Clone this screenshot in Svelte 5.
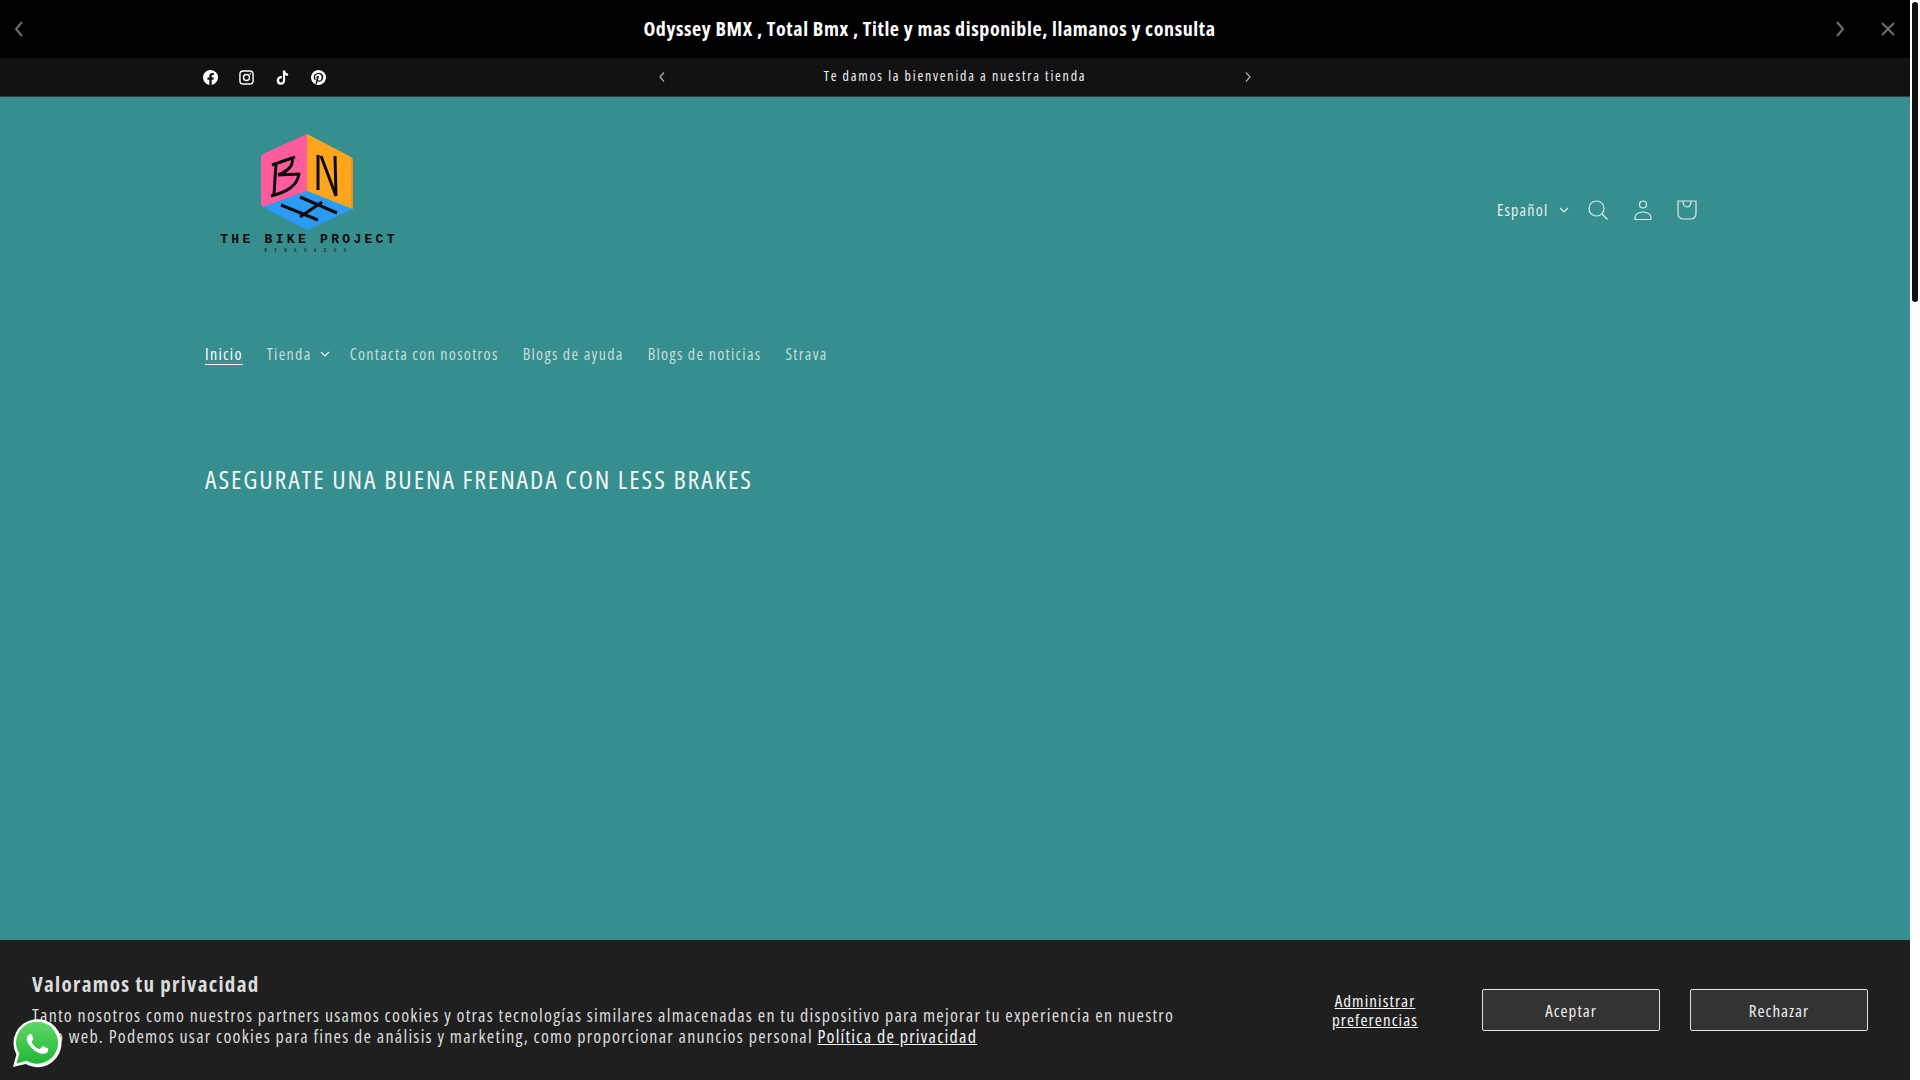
<script>
  const socials = ['facebook', 'instagram', 'tiktok', 'pinterest'];
  const navLinks = ['Contacta con nosotros', 'Blogs de ayuda', 'Blogs de noticias', 'Strava'];
</script>

<div class="page">
  <div class="site">
    <div class="promo">
      <button class="promo-btn" aria-label="Anterior">
        <svg width="14" height="18" viewBox="0 0 14 18"><path d="M10 2 4 9l6 7" /></svg>
      </button>
      <p class="promo-text">Odyssey BMX , Total Bmx , Title y mas disponible, llamanos y consulta</p>
      <button class="promo-btn" aria-label="Siguiente">
        <svg width="14" height="18" viewBox="0 0 14 18"><path d="m4 2 6 7-6 7" /></svg>
      </button>
      <button class="promo-close" aria-label="Cerrar">
        <svg width="14" height="14" viewBox="0 0 14 14"><path d="m1 1 12 12M13 1 1 13" /></svg>
      </button>
    </div>

    <div class="utility">
      <div class="utility-inner">
        <div class="socials">
          {#each socials as name}
            <a href="#top" class="social" aria-label={name}>
              {#if name === 'facebook'}
                <svg viewBox="0 0 16 16" width="15" height="15"><path fill="#fff" d="M16 8a8 8 0 1 0-9.250 7.900v-5.600H4.700V8h2.050V6.240c0-2 1.200-3.120 3.030-3.120.88 0 1.800.16 1.800.16v1.970h-1c-1 0-1.300.62-1.300 1.250V8h2.220l-.35 2.300H9.280v5.600A8 8 0 0 0 16 8z" /></svg>
              {:else if name === 'instagram'}
                <svg viewBox="0 0 16 16" width="15" height="15"><rect x="1" y="1" width="14" height="14" rx="3.600" fill="none" stroke="#fff" stroke-width="1.500" /><circle cx="8" cy="8" r="3.200" fill="none" stroke="#fff" stroke-width="1.500" /><circle cx="12" cy="4" r=".9" fill="#fff" /></svg>
              {:else if name === 'tiktok'}
                <svg viewBox="0 0 16 16" width="15" height="15"><path fill="#fff" d="M8.400.5h2.400c.2 1.900 1.300 3.100 3.200 3.300v2.400c-1.200 0-2.200-.3-3.200-1v5.600c0 3-2.300 5-5 5S1.800 13.600 1.800 11c0-2.900 2.500-5 5.500-4.700v2.500c-1.600-.3-3 .7-3 2.200 0 1.300 1 2.200 2.200 2.200 1.300 0 2-.9 2-2.300z" /></svg>
              {:else}
                <svg viewBox="0 0 16 16" width="15" height="15"><path fill="#fff" d="M8 0a8 8 0 0 0-2.900 15.450c-.07-.63-.13-1.600.03-2.300l.94-3.970s-.24-.48-.24-1.180c0-1.100.64-1.930 1.440-1.930.68 0 1 .51 1 1.120 0 .68-.43 1.700-.66 2.640-.19.790.4 1.440 1.180 1.440 1.420 0 2.500-1.500 2.500-3.650 0-1.900-1.370-3.240-3.330-3.240-2.270 0-3.600 1.700-3.600 3.460 0 .69.260 1.420.6 1.830.06.080.07.150.05.230l-.22.900c-.04.150-.12.180-.27.110-1-.46-1.620-1.920-1.620-3.100 0-2.520 1.830-4.840 5.290-4.840 2.770 0 4.930 1.980 4.930 4.620 0 2.760-1.740 4.980-4.150 4.980-.81 0-1.570-.42-1.830-.92l-.5 1.900c-.18.700-.67 1.570-1 2.100A8 8 0 1 0 8 0z" /></svg>
              {/if}
            </a>
          {/each}
        </div>
        <div class="announce">
          <svg class="chev" width="10" height="12" viewBox="0 0 10 12"><path d="M7 1.500 3 6l4 4.500" /></svg>
          <span class="announce-text">Te damos la bienvenida a nuestra tienda</span>
          <svg class="chev" width="10" height="12" viewBox="0 0 10 12"><path d="m3 1.500 4 4.500-4 4.500" /></svg>
        </div>
        <div class="utility-spacer"></div>
      </div>
    </div>

    <header class="header">
      <div class="header-top">
        <a href="#top" class="logo" aria-label="The Bike Project">
          <svg width="92" height="96" viewBox="0 0 92 96">
            <path fill="#ff5c9d" d="M46 0v57L2 73c-1-1-2-2-2-4V24c0-2 1-3 2-4z" />
            <path fill="#ffa51d" d="M46 0l44 23v53L46 57z" />
            <path fill="#e8921a" d="M90 23l2 2v50l-2 1z" />
            <path fill="#2a9cf5" d="M46 57l46 18-46 21L2 73z" />
            <g fill="none" stroke="#0b0b0b" stroke-width="3" stroke-linejoin="round">
              <path d="M11 31 34 23M15 30l-2 30M31 24c2 6-3 13-14 17M17 41l21-1c-2 12-12 18-28 22" />
              <path d="M57 21v35M60 22l15 40M74 22l1 40" />
              <path d="M39 63l37 16M20 71l37 15M61 68 39 83" />
            </g>
          </svg>
          <span class="logo-name">THE BIKE PROJECT</span>
          <span class="logo-sub">BENAHADUX</span>
        </a>
        <div class="header-tools">
          <span class="locale">Español
            <svg class="caret" width="10" height="6" viewBox="0 0 10 6"><path d="m1 1 4 4 4-4" /></svg>
          </span>
          <svg class="tool" width="20" height="20" viewBox="0 0 20 20"><circle cx="8.500" cy="8.500" r="7.500" /><path d="m14 14 5.500 5.500" /></svg>
          <svg class="tool" width="20" height="20" viewBox="0 0 20 20"><circle cx="10" cy="4.500" r="3.500" /><path d="M2 19.500v-2c0-3 3.500-5.500 8-5.500s8 2.500 8 5.500v2z" /></svg>
          <svg class="tool" width="20" height="20" viewBox="0 0 20 20"><path d="M1 1h18v13a5 5 0 0 1-5 5H6a5 5 0 0 1-5-5zM6 1c0 8 8 8 8 0" /></svg>
        </div>
      </div>
      <nav class="nav">
        <a href="#top" class="nav-link active">Inicio</a>
        <span class="nav-link dropdown">Tienda
          <svg class="caret" width="10" height="6" viewBox="0 0 10 6"><path d="m1 1 4 4 4-4" /></svg>
        </span>
        {#each navLinks as link}
          <a href="#top" class="nav-link">{link}</a>
        {/each}
      </nav>
    </header>

    <main class="content">
      <h2>ASEGURATE UNA BUENA FRENADA CON LESS BRAKES</h2>
    </main>
  </div>

  <div class="scrollbar"><div class="thumb"></div></div>

  <section class="cookies">
    <div class="cookies-copy">
      <h3>Valoramos tu privacidad</h3>
      <p>Tanto nosotros como nuestros partners usamos cookies y otras tecnologías similares almacenadas en tu dispositivo para mejorar tu experiencia en nuestro<br />sitio web. Podemos usar cookies para fines de análisis y marketing, como proporcionar anuncios personal <a href="#top">Política de privacidad</a></p>
    </div>
    <div class="cookies-actions">
      <a href="#top" class="prefs">Administrar preferencias</a>
      <button class="cookie-btn">Aceptar</button>
      <button class="cookie-btn">Rechazar</button>
    </div>
  </section>

  <a href="#top" class="whatsapp" aria-label="WhatsApp">
    <svg width="50" height="50" viewBox="0 0 50 50">
      <defs>
        <linearGradient id="wa" x1="0" y1="0" x2="0" y2="1"><stop offset="0" stop-color="#5fd868" /><stop offset="1" stop-color="#22b735" /></linearGradient>
      </defs>
      <path fill="#fff" d="M1 49l3.400-12.400A24 24 0 1 1 13.600 46z" />
      <path fill="url(#wa)" d="M4.500 45.500l2.700-9.700a21 21 0 1 1 7.200 7z" />
      <path fill="#fff" d="M18 13c-.6-1.300-1.200-1.300-1.800-1.300h-1.500c-.5 0-1.400.2-2.100 1-.7.800-2.700 2.700-2.700 6.500s2.800 7.500 3.200 8c.4.500 5.400 8.600 13.300 11.700 6.600 2.600 7.900 2.100 9.400 1.900 1.400-.1 4.600-1.900 5.200-3.700.7-1.800.7-3.400.5-3.700-.2-.3-.7-.5-1.600-.9-.8-.4-4.800-2.400-5.600-2.700-.8-.3-1.300-.4-1.800.4-.6.800-2.100 2.700-2.600 3.200-.5.600-.9.600-1.800.2-.8-.4-3.400-1.300-6.500-4-2.400-2.100-4-4.800-4.500-5.600-.5-.8 0-1.300.4-1.700.4-.4.800-.9 1.200-1.400.4-.5.500-.8.800-1.400.3-.6.100-1 0-1.400-.2-.4-1.800-4.400-2.500-6.100z" transform="translate(8 8) scale(.68)" />
    </svg>
  </a>
</div>

<style>
  :global(body) {
    margin: 0;
    overflow: hidden;
    background: #fff;
  }

  .page {
    height: 1080px;
    display: flex;
    font-family: "Open Sans", "Roboto", sans-serif;
    font-stretch: 75%;
    color: #e6f0f0;
    overflow: hidden;
  }

  .site {
    width: 1910px;
    flex: none;
    background: #378e8e;
  }

  .scrollbar {
    flex: 1;
    background: #fff;
    padding: 2px 2px 0;
  }

  .thumb {
    height: 300px;
    background: #111;
    border-radius: 3px;
  }

  .promo {
    height: 58px;
    background: #000;
    display: flex;
    align-items: center;
    padding: 0 15px 0 12px;
  }

  .promo-text {
    flex: 1;
    margin: 0 0 1px;
    text-align: center;
    color: #fff;
    font-size: 20px;
    line-height: 28px;
    font-weight: 700;
    letter-spacing: .6px;
  }

  .promo-btn,
  .promo-close {
    border: 0;
    background: none;
    padding: 0;
    display: flex;
  }

  .promo-btn svg,
  .promo-close svg {
    fill: none;
    stroke: #6f6f6f;
    stroke-width: 2;
  }

  .promo-close {
    margin-left: 34px;
  }

  .utility {
    height: 38px;
    background: #121212;
    border-bottom: 1px solid #3a3a3a;
  }

  .utility-inner {
    width: 1500px;
    height: 100%;
    margin: 0 auto;
    display: flex;
    align-items: center;
  }

  .socials {
    flex: 1;
    display: flex;
    gap: 21px;
    margin-left: -2px;
  }

  .social {
    display: flex;
  }

  .announce {
    width: 596px;
    padding-left: 2px;
    display: flex;
    align-items: center;
    justify-content: space-between;
  }

  .announce-text {
    font-size: 14px;
    line-height: 18px;
    margin-bottom: 2px;
    letter-spacing: 1.750px;
    color: #f0f0f0;
  }

  .utility-spacer {
    flex: 1;
  }

  .chev {
    fill: none;
    stroke: #aaa;
    stroke-width: 1.300;
  }

  .header {
    width: 1500px;
    margin: 0 auto;
  }

  .header-top {
    display: flex;
    align-items: center;
    justify-content: space-between;
    height: 225px;
  }

  .logo {
    align-self: flex-start;
    display: flex;
    flex-direction: column;
    align-items: center;
    text-decoration: none;
    width: 180px;
    margin: 37px 0 0 14px;
    color: #0b0b0b;
  }

  .logo svg {
    margin: 0 4px 3px 0;
  }

  .logo-name {
    font-size: 13px;
    letter-spacing: 3.300px;
    line-height: 13px;
    font-family: "Liberation Mono", monospace;
    font-stretch: 100%;
    font-weight: 700;
    white-space: nowrap;
  }

  .logo-sub {
    font-size: 5px;
    letter-spacing: 7.500px;
    line-height: 6px;
    margin-top: 1px;
  }

  .header-tools {
    display: flex;
    align-items: center;
    gap: 24.500px;
    margin-right: 8px;
  }

  .locale {
    font-size: 16px;
    letter-spacing: 1.200px;
    display: flex;
    align-items: center;
    gap: 10px;
    margin-right: -5px;
  }

  .caret {
    fill: none;
    stroke: #e6f0f0;
    stroke-width: 1.200;
  }

  .tool {
    fill: none;
    stroke: #dcebeb;
    stroke-width: 1.200;
  }

  .nav {
    display: flex;
    align-items: center;
    height: 64px;
    gap: 24px;
  }

  .nav-link {
    font-size: 16px;
    letter-spacing: 1.300px;
    color: #c6dede;
    text-decoration: none;
    display: flex;
    align-items: center;
    gap: 8px;
  }

  .nav-link.dropdown {
    margin-right: -4px;
  }

  .nav-link.active {
    color: #fff;
    text-decoration: underline;
    text-underline-offset: 4px;
  }

  .content {
    width: 1500px;
    margin: 0 auto;
    padding-top: 75px;
  }

  h2 {
    margin: 0;
    font-size: 26px;
    line-height: 36px;
    font-weight: 400;
    letter-spacing: 1.880px;
    color: #f0f6f6;
  }

  .cookies {
    position: fixed;
    left: 0;
    bottom: 0;
    width: 1910px;
    height: 140px;
    box-sizing: border-box;
    padding: 31px 42px 0 32px;
    background: #1f1f1f;
    color: #dcdcdc;
    display: flex;
    justify-content: space-between;
  }

  .cookies-copy {
    width: 1180px;
    flex: none;
  }

  h3 {
    margin: 0 0 8px;
    font-size: 21px;
    line-height: 26px;
    letter-spacing: 1.300px;
    font-weight: 700;
  }

  .cookies-copy p {
    margin: 0;
    font-size: 18px;
    line-height: 21px;
    letter-spacing: 1.240px;
    white-space: nowrap;
  }

  .cookies-copy a,
  .prefs {
    color: #f4f4f4;
  }

  .cookies-actions {
    display: flex;
    align-items: center;
    gap: 30px;
    height: 76px;
    margin-top: 1px;
  }

  .prefs {
    width: 110px;
    margin-right: 22px;
    text-align: center;
    font-size: 17px;
    line-height: 19px;
    letter-spacing: 1.100px;
  }

  .cookie-btn {
    width: 178px;
    height: 42px;
    background: #333;
    color: #eee;
    border: 1px solid #e0e0e0;
    border-radius: 2px;
    font: inherit;
    font-size: 17px;
    letter-spacing: 1px;
  }

  .whatsapp {
    position: fixed;
    left: 12px;
    top: 1018px;
    display: flex;
  }
</style>
